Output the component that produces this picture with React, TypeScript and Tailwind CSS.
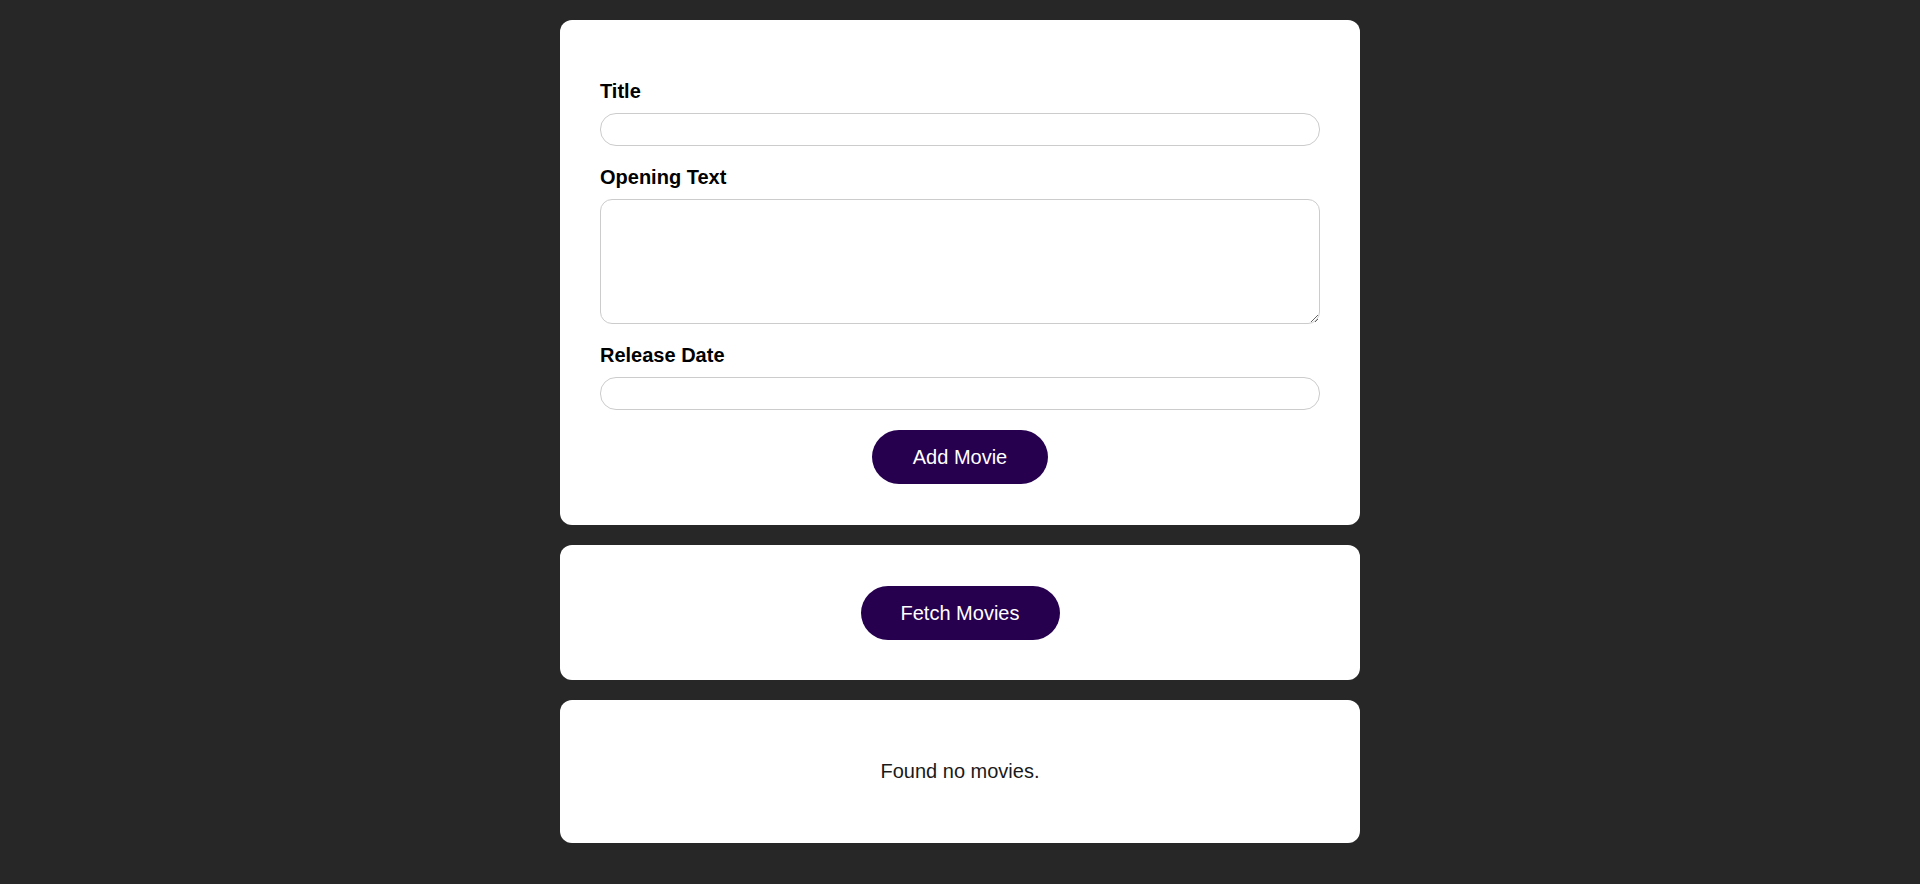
import { useState } from 'react';

type Movie = { id: string; title: string; openingText: string; releaseDate: string };

export default function App() {
  const [title, setTitle] = useState('');
  const [openingText, setOpeningText] = useState('');
  const [releaseDate, setReleaseDate] = useState('');
  const [movies] = useState<Movie[]>([]);

  const inputCls =
    'block w-full h-[33px] rounded-[16px] border border-[#cccccc] bg-white px-3 text-[20px] outline-none';

  return (
    <div className="min-h-screen bg-[#272727] pt-[20px] pb-[41px] font-['Liberation_Sans',Arial,sans-serif] text-black">
      {/* Form */}
      <section className="mx-auto w-[800px] rounded-[12px] bg-white px-[40px] pt-[60px] pb-[41px]">
        <form onSubmit={(e) => e.preventDefault()}>
          <div className="mb-[20px]">
            <label htmlFor="title" className="block text-[20px] leading-[23px] font-bold mb-[10px]">Title</label>
            <input id="title" type="text" className={inputCls} value={title} onChange={(e) => setTitle(e.target.value)} />
          </div>
          <div className="mb-[20px]">
            <label htmlFor="opening-text" className="block text-[20px] leading-[23px] font-bold mb-[10px]">Opening Text</label>
            <textarea
              id="opening-text"
              rows={5}
              className="block w-full h-[125px] rounded-[12px] border border-[#cccccc] bg-white px-3 text-[20px] outline-none"
              value={openingText}
              onChange={(e) => setOpeningText(e.target.value)}
            />
          </div>
          <div className="mb-[20px]">
            <label htmlFor="date" className="block text-[20px] leading-[23px] font-bold mb-[10px]">Release Date</label>
            <input id="date" type="text" className={inputCls} value={releaseDate} onChange={(e) => setReleaseDate(e.target.value)} />
          </div>
          <div className="flex justify-center">
            <button className="h-[54px] w-[176px] rounded-[27px] bg-[#26004f] text-[20px] text-white">Add Movie</button>
          </div>
        </form>
      </section>

      {/* Fetch */}
      <section className="mx-auto mt-[20px] flex h-[135px] w-[800px] items-center justify-center rounded-[12px] bg-white">
        <button className="h-[54px] w-[199px] rounded-[27px] bg-[#26004f] text-[20px] text-white">Fetch Movies</button>
      </section>

      {/* Movies list */}
      <section className="mx-auto mt-[20px] flex h-[143px] w-[800px] items-center justify-center rounded-[12px] bg-white">
        {movies.length === 0 && <p className="text-[20px] leading-[23px] text-[#1a1a1a]">Found no movies.</p>}
      </section>
    </div>
  );
}
